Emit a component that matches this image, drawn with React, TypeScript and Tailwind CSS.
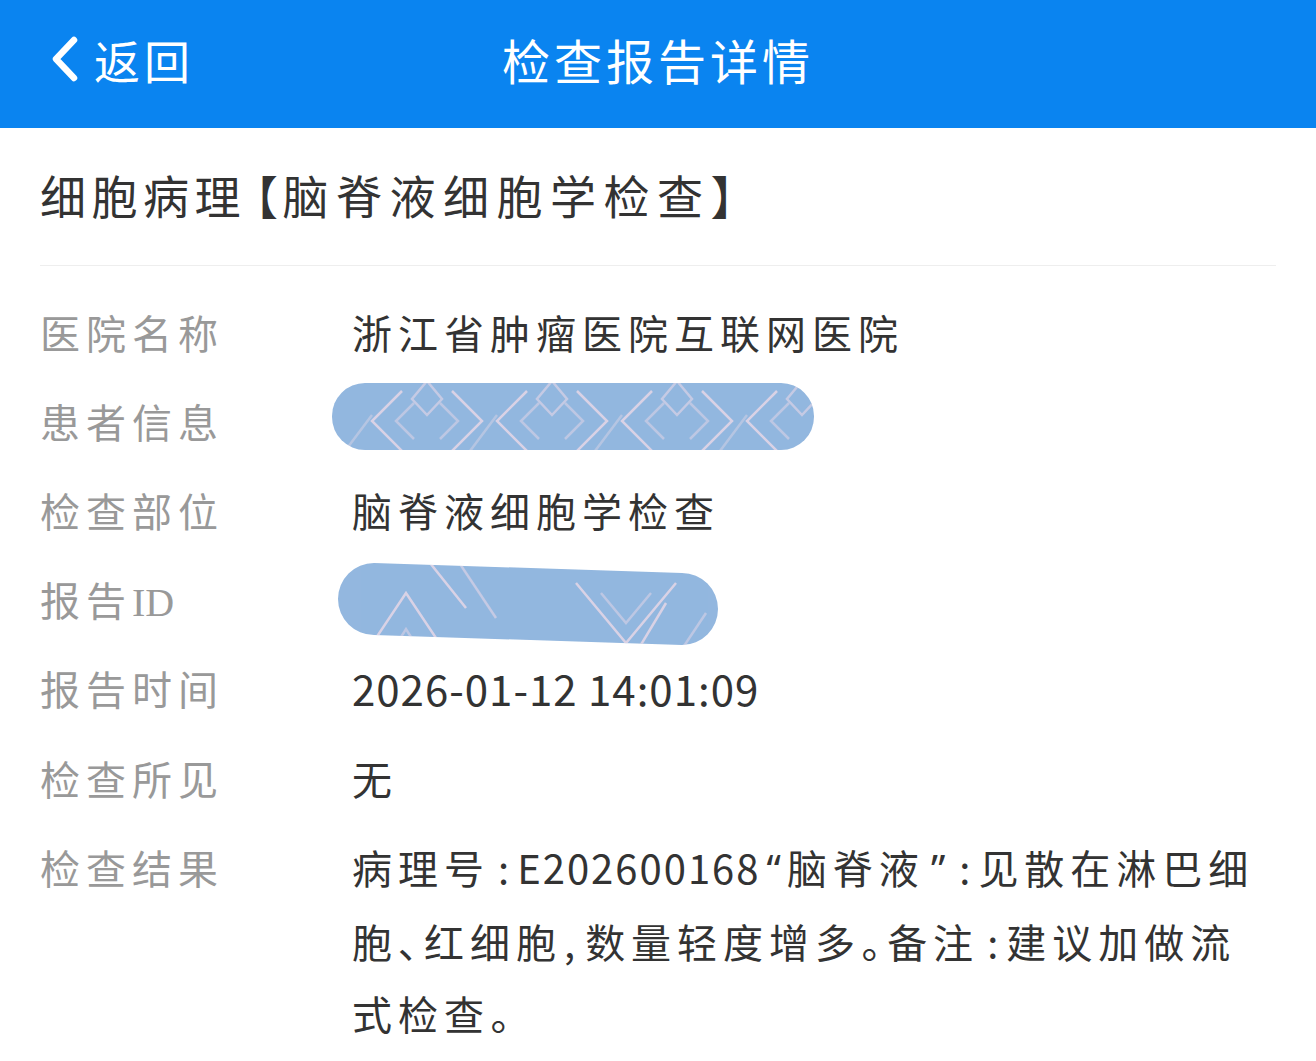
import React from "react";

const FONT = '"Noto Sans CJK SC", "Noto Sans", sans-serif';

function Chevron() {
  return (
    <svg width="30" height="46" viewBox="0 0 30 46" className="shrink-0">
      <path d="M24 4 L6 23 L24 42" fill="none" stroke="#fff" strokeWidth="6.5" strokeLinecap="round" strokeLinejoin="round" />
    </svg>
  );
}

function Blob1() {
  const chevs = [];
  for (let i = 0; i < 4; i++) {
    const x = 20 + i * 125;
    chevs.push(
      <g key={i}>
        <polyline points={`${x + 50},6 ${x + 20},36 ${x + 50},66`} />
        <polyline points={`${x + 62},18 ${x + 44},36 ${x + 62},54`} opacity="0.6" />
        <polyline points={`${x + 75},-4 ${x + 60},14 ${x + 75},30 ${x + 90},14 ${x + 75},-4`} opacity="0.7" />
        <polyline points={`${x + 100},6 ${x + 130},36 ${x + 100},66`} />
        <polyline points={`${x + 88},18 ${x + 106},36 ${x + 88},54`} opacity="0.6" />
        <polyline points={`${x - 10},70 ${x + 20},30`} opacity="0.5" />
      </g>
    );
  }
  return (
    <svg width="482" height="72" viewBox="0 0 482 72" className="-ml-[20px] block overflow-visible">
      <defs>
        <clipPath id="b1">
          <rect x="0" y="-2" width="482" height="67" rx="33" />
        </clipPath>
      </defs>
      <rect x="0" y="-2" width="482" height="67" rx="33" fill="#93b7df" />
      <g clipPath="url(#b1)" stroke="#ecd9e7" strokeWidth="2.5" fill="none" opacity="0.8">
        {chevs}
      </g>
    </svg>
  );
}

function Blob2() {
  const d = "M38 0 L346 10 A36 36 0 0 1 346 82 L38 72 A36 36 0 0 1 38 0 Z";
  return (
    <svg width="382" height="72" viewBox="0 0 382 72" className="-ml-[16px] block overflow-visible">
      <defs>
        <clipPath id="b2">
          <path d={d} />
        </clipPath>
      </defs>
      <path d={d} fill="#93b7df" />
      <g clipPath="url(#b2)" stroke="#ecd9e7" strokeWidth="2.5" fill="none" opacity="0.8">
        <polyline points="30,90 70,30 110,90" />
        <polyline points="55,90 70,66 85,90" opacity="0.6" />
        <polyline points="90,-5 130,45" />
        <polyline points="120,-5 160,55" opacity="0.7" />
        <polyline points="240,20 290,80 340,20" />
        <polyline points="265,30 290,60 315,30" opacity="0.6" />
        <polyline points="330,40 300,90" />
        <polyline points="370,50 340,95" opacity="0.6" />
      </g>
    </svg>
  );
}

function Row({ label, children }: { label: React.ReactNode; children: React.ReactNode }) {
  return (
    <div className="flex items-start">
      <div className="h-[72px] w-[312px] shrink-0 overflow-hidden whitespace-nowrap text-[40px] leading-[72px] tracking-[6px] text-[#999999]">
        {label}
      </div>
      <div className="min-w-0 flex-1 text-[40px] leading-[72px] tracking-[6px] text-[#333333]">{children}</div>
    </div>
  );
}

export default function App() {
  return (
    <div className="min-h-[1061px] w-full bg-white" style={{ fontFamily: FONT }}>
      <header className="relative flex h-[128px] items-center bg-[#0a84f0] px-[50px] pb-[10px] text-white">
        <div className="flex items-center gap-[14px]">
          <Chevron />
          <span className="text-[46px] tracking-[4px]">返回</span>
        </div>
        <div className="absolute inset-0 flex items-center justify-center pb-[10px]">
          <span className="text-[48px] tracking-[4px]">检查报告详情</span>
        </div>
      </header>
      <main className="px-[40px]">
        <div className="flex h-[138px] items-center border-b border-[#eeeeee] pb-[4px]">
          <h1 className="text-[46px] tracking-[5.5px] text-[#333333]">
            <span>细胞病理</span>
            <span className="ml-[8px] [font-feature-settings:'palt']">【</span>
            <span className="tracking-[7.5px]">脑脊液细胞学检查</span>
            <span>】</span>
          </h1>
        </div>
        <div className="flex flex-col gap-[17px] pt-[30px]">
          <Row label="医院名称">浙江省肿瘤医院互联网医院</Row>
          <Row label="患者信息">
            <div className="flex h-[72px] items-center">
              <Blob1 />
            </div>
          </Row>
          <Row label="检查部位">脑脊液细胞学检查</Row>
          <Row
            label={
              <>
                <span>报告</span>
                <span className="tracking-[0px]" style={{ fontFamily: '"Liberation Serif", serif' }}>ID</span>
              </>
            }
          >
            <div className="flex h-[72px] items-start">
              <Blob2 />
            </div>
          </Row>
          <Row label="报告时间">
            <span className="text-[42px] tracking-[1px]">2026-01-12 14:01:09</span>
          </Row>
          <Row label="检查所见">无</Row>
          <Row label="检查结果">
            <p className="pr-[10px]">
              <span>病理号</span>
              <span className="mx-[8px] tracking-[0px]">:</span>
              <span className="tracking-[2px]">E202600168</span>
              <span className="mx-[6px] tracking-[0px]" style={{ fontFamily: '"Noto Sans", sans-serif' }}>“</span>
              <span>脑脊液</span>
              <span className="mx-[6px] tracking-[0px]" style={{ fontFamily: '"Noto Sans", sans-serif' }}>”</span>
              <span className="mx-[8px] tracking-[0px]">:</span>
              <span>见散在淋巴细胞</span>
              <span className="[font-feature-settings:'palt']">、</span>
              <span>红细胞</span>
              <span className="ml-[2px] mr-[10px] tracking-[0px]">,</span>
              <span>数量轻度增多</span>
              <span className="[font-feature-settings:'palt']">。</span>
              <span>备注</span>
              <span className="mx-[8px] tracking-[0px]">:</span>
              <span>建议加做流式检查</span>
              <span className="[font-feature-settings:'palt']">。</span>
            </p>
          </Row>
        </div>
      </main>
    </div>
  );
}
